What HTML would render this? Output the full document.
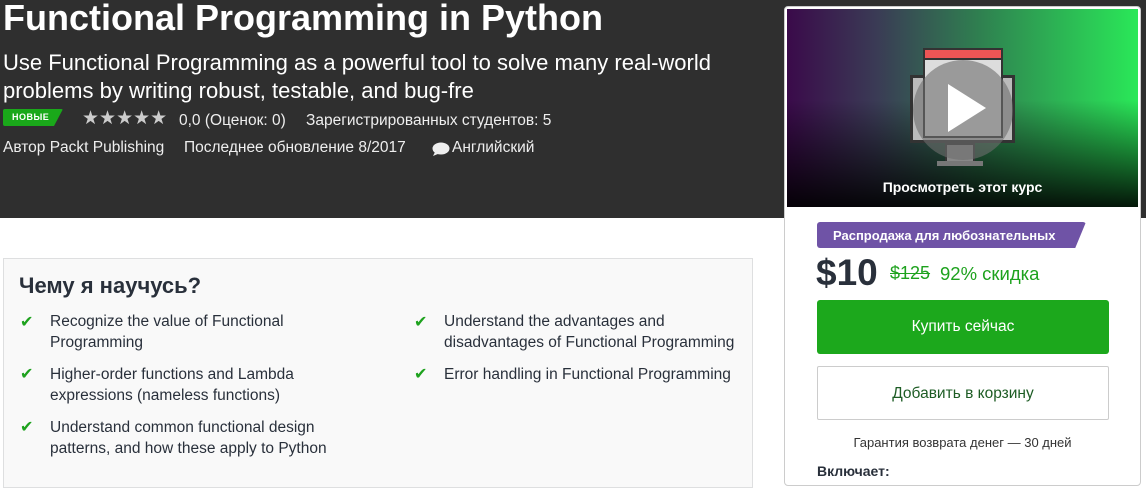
<!DOCTYPE html>
<html><head><meta charset="utf-8"><style>
*{margin:0;padding:0;box-sizing:border-box}
body{width:1146px;height:473px;overflow:hidden;background:#fff;font-family:"Liberation Sans","DejaVu Sans",sans-serif;position:relative;color:#29303b}
.hdr{position:absolute;left:0;top:0;width:1146px;height:218px;background:#2f2f2f}
.t{position:absolute;color:#fff;white-space:nowrap}
.box{position:absolute;left:3px;top:258px;width:750px;height:230px;background:#f9f9f9;border:1px solid #dedfe0}
.it{position:absolute;font-size:15.5px;line-height:21px;color:#29303b}
.ck{position:absolute;color:#1ea21e;font-size:16px;font-weight:bold}
.card{position:absolute;left:784px;top:6px;width:357px;height:480px;background:#fff;border:1px solid #ccc;border-radius:4px}
</style></head><body>
<div class="hdr"></div>
<div class="t" style="left:3px;top:-4px;font-size:36px;font-weight:bold;line-height:44px">Functional Programming in Python</div>
<div class="t" style="left:3px;top:49px;font-size:22px;line-height:28px">Use Functional Programming as a powerful tool to solve many real-world<br>problems by writing robust, testable, and bug-fre</div>
<div style="position:absolute;left:3px;top:109px;width:60px;height:17px;background:#1aa81a;clip-path:polygon(0 0,100% 0,85% 100%,0 100%);border-radius:2px"></div>
<div class="t" style="left:12px;top:112px;font-size:9px;font-weight:bold;letter-spacing:.5px">НОВЫЕ</div>
<div class="t" style="left:82px;top:107px;font-size:19px;color:#ccc;letter-spacing:0px">★★★★★</div>
<div class="t" style="left:179px;top:112px;font-size:15.5px;color:#eee">0,0 (Оценок: 0)</div>
<div class="t" style="left:306px;top:112px;font-size:15.5px;color:#eee">Зарегистрированных студентов: 5</div>
<div class="t" style="left:3px;top:139px;font-size:15.5px;color:#eee">Автор Packt Publishing</div>
<div class="t" style="left:184px;top:139px;font-size:15.5px;color:#eee">Последнее обновление 8/2017</div>
<svg style="position:absolute;left:432px;top:142px" width="18" height="15" viewBox="0 0 18 15"><ellipse cx="9" cy="6.5" rx="8.5" ry="6" fill="#eee"/><path d="M3 10 L1 14 L7 11.5Z" fill="#eee"/></svg>
<div class="t" style="left:452px;top:139px;font-size:15.5px;color:#eee">Английский</div>
<div class="box"></div>
<div style="position:absolute;left:19px;top:273px;font-size:22px;font-weight:bold;color:#29303b">Чему я научусь?</div>
<div class="ck" style="left:20px;top:312px">✔</div><div class="it" style="left:50px;top:311px">Recognize the value of Functional<br>Programming</div>
<div class="ck" style="left:20px;top:364px">✔</div><div class="it" style="left:50px;top:364px">Higher-order functions and Lambda<br>expressions (nameless functions)</div>
<div class="ck" style="left:20px;top:417px">✔</div><div class="it" style="left:50px;top:417px">Understand common functional design<br>patterns, and how these apply to Python</div>
<div class="ck" style="left:414px;top:312px">✔</div><div class="it" style="left:444px;top:311px">Understand the advantages and<br>disadvantages of Functional Programming</div>
<div class="ck" style="left:414px;top:364px">✔</div><div class="it" style="left:444px;top:364px">Error handling in Functional Programming</div>
<div class="card"></div>
<div style="position:absolute;left:787px;top:9px;width:351px;height:198px;background:linear-gradient(90deg,#3a0a4a 0%,#3a3a55 25%,#2f8050 55%,#2ae858 100%)"></div>
<div style="position:absolute;left:787px;top:100px;width:351px;height:107px;background:linear-gradient(180deg,rgba(0,0,0,0),rgba(0,0,0,.9))"></div>
<div style="position:absolute;left:910px;top:75px;width:105px;height:68px;background:#bbb;border:3px solid #333"></div>
<div style="position:absolute;left:923px;top:48px;width:80px;height:90px;background:#ddd;border:2px solid #333"></div>
<div style="position:absolute;left:923px;top:48px;width:80px;height:12px;background:#e55;border:2px solid #333"></div>
<div style="position:absolute;left:945px;top:143px;width:30px;height:20px;background:#888;border:2px solid #333"></div>
<div style="position:absolute;left:937px;top:161px;width:46px;height:5px;background:#777"></div>
<div style="position:absolute;left:913px;top:60px;width:100px;height:100px;border-radius:50%;background:rgba(110,110,110,.6)"></div>
<div style="position:absolute;left:948px;top:84px;width:0;height:0;border-left:38px solid #fff;border-top:24px solid transparent;border-bottom:24px solid transparent"></div>
<div style="position:absolute;left:787px;top:179px;width:351px;text-align:center;color:#fff;font-size:14px;font-weight:bold">Просмотреть этот курс</div>
<div style="position:absolute;left:817px;top:222px;width:269px;height:26px;background:#6f53a6;clip-path:polygon(0 0,100% 0,96% 100%,0 100%);border-radius:3px"></div>
<div style="position:absolute;left:833px;top:228px;color:#fff;font-size:13px;font-weight:bold">Распродажа для любознательных</div>
<div style="position:absolute;left:816px;top:252px;font-size:37px;font-weight:bold;color:#29303b">$10</div>
<div style="position:absolute;left:890px;top:263px;font-size:18px;color:#1ea21e;text-decoration:line-through">$125</div>
<div style="position:absolute;left:940px;top:263px;font-size:18.5px;color:#1ea21e">92% скидка</div>
<div style="position:absolute;left:817px;top:300px;width:292px;height:54px;background:#1ca81c;border-radius:3px;color:#fff;font-size:15.5px;text-align:center;line-height:54px">Купить сейчас</div>
<div style="position:absolute;left:817px;top:366px;width:292px;height:54px;background:#fff;border:1px solid #ccc;border-radius:2px;color:#1d5c24;font-size:15.5px;text-align:center;line-height:54px">Добавить в корзину</div>
<div style="position:absolute;left:784px;top:435px;width:357px;text-align:center;font-size:13px;color:#333">Гарантия возврата денег — 30 дней</div>
<div style="position:absolute;left:817px;top:463px;font-size:14px;font-weight:bold;color:#29303b">Включает:</div>
</body></html>
